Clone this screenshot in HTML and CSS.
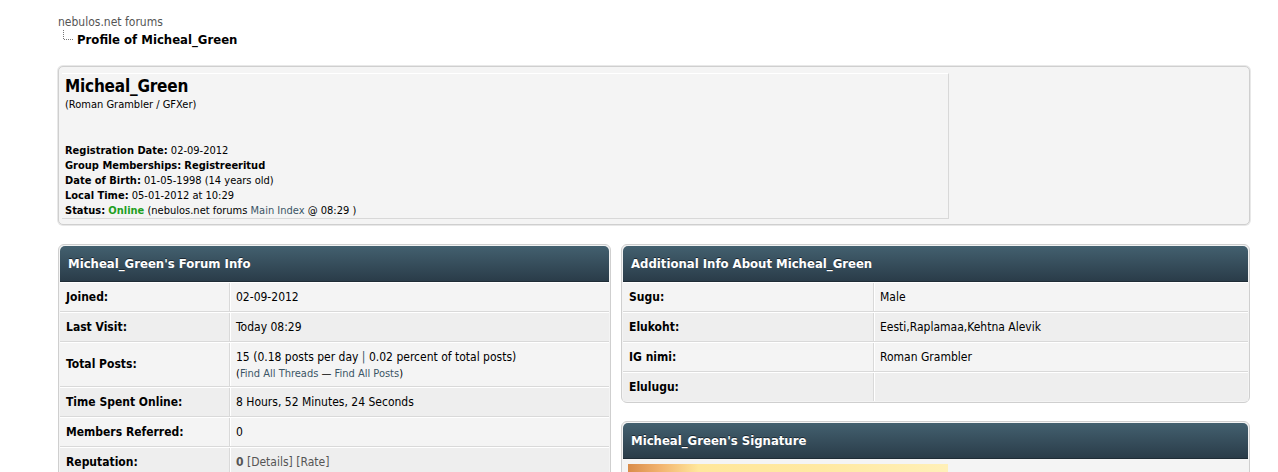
FILE: index.html
```html
<!DOCTYPE html>
<html>
<head>
<meta charset="utf-8">
<link rel="stylesheet" href="styles.css">
</head>
<body>
<div class="page">
  <div class="crumbs">
    <div class="crumb-root">nebulos.net forums</div>
    <div class="crumb-current">
      <svg class="tree" width="12" height="10" viewBox="0 0 12 10"><path d="M0.5 0v9.5H11" fill="none" stroke="#777" stroke-width="1" stroke-dasharray="1 1"/></svg>
      <span>Profile of Micheal_Green</span>
    </div>
  </div>

  <div class="profile">
    <div class="profile-main">
      <div class="pname">Micheal_Green</div>
      <div class="ptitle">(Roman Grambler / GFXer)</div>
      <div class="pdetails">
        <div><b>Registration Date:</b> 02-09-2012</div>
        <div><b>Group Memberships:</b> <b>Registreeritud</b></div>
        <div><b>Date of Birth:</b> 01-05-1998 (14 years old)</div>
        <div><b>Local Time:</b> 05-01-2012 at 10:29</div>
        <div><b>Status:</b> <b class="online">Online</b> (nebulos.net forums <a class="lnk">Main Index</a> @ 08:29 )</div>
      </div>
    </div>
    <div class="profile-side"></div>
  </div>

  <div class="columns">
    <div class="panel left">
      <div class="phead">Micheal_Green's Forum Info</div>
      <div class="row a"><div class="lbl">Joined:</div><div class="val">02-09-2012</div></div>
      <div class="row b"><div class="lbl">Last Visit:</div><div class="val">Today 08:29</div></div>
      <div class="row a tall"><div class="lbl">Total Posts:</div><div class="val">15 (0.18 posts per day <span class="pipe">|</span> 0.02 percent of total posts)<div class="small">(<a class="lnk">Find All Threads</a> — <a class="lnk">Find All Posts</a>)</div></div></div>
      <div class="row b"><div class="lbl">Time Spent Online:</div><div class="val">8 Hours, 52 Minutes, 24 Seconds</div></div>
      <div class="row a"><div class="lbl">Members Referred:</div><div class="val">0</div></div>
      <div class="row b"><div class="lbl">Reputation:</div><div class="val grey"><b>0</b> [Details] [Rate]</div></div>
    </div>
    <div class="rightcol">
      <div class="panel right">
        <div class="phead">Additional Info About Micheal_Green</div>
        <div class="row a"><div class="lbl">Sugu:</div><div class="val">Male</div></div>
        <div class="row b"><div class="lbl">Elukoht:</div><div class="val">Eesti,Raplamaa,Kehtna Alevik</div></div>
        <div class="row a"><div class="lbl">IG nimi:</div><div class="val">Roman Grambler</div></div>
        <div class="row b last"><div class="lbl">Elulugu:</div><div class="val"></div></div>
      </div>
      <div class="panel sig">
        <div class="phead">Micheal_Green's Signature</div>
        <div class="sigbody"><div class="sigimg"></div></div>
      </div>
    </div>
  </div>
</div>
</body>
</html>
```
FILE: styles.css
```css
html, body { margin: 0; padding: 0; background: #fff; }
body {
  font-family: "DejaVu Sans Condensed", "DejaVu Sans", sans-serif;
  font-size: 12px;
  color: #000;
  height: 472px;
  overflow: hidden;
}
.page { padding: 14px 28px 0 58px; }
.crumbs { height: 51px; }
.crumb-root { color: #555; font-size: 12px; line-height: 14px; margin-top: 1px; }
.crumb-current { display: flex; align-items: flex-start; font-weight: bold; font-size: 13px; line-height: 16px; margin-top: 1px; }
.tree { margin: 0 2px 0 5px; }
.crumb-current span { margin-top: 2px; }

.profile {
  display: flex;
  background: #f4f4f4;
  border: 1px solid #cfcfcf;
  border-radius: 5px;
  box-shadow: 0 0 0 1px #e8e8e8;
  padding: 6px 3px 6px 3px;
  height: 145px;
}
.profile-main {
  width: 887px;
  border-top: 1px solid #fff;
  border-right: 1px solid #d8d8d8;
  border-bottom: 1px solid #d8d8d8;
  padding: 2px 3px 0 3px;
  box-sizing: border-box;
  height: 146px;
}
.pname { font-weight: bold; font-size: 17px; line-height: 20px; letter-spacing: -0.2px; }
.ptitle { font-size: 11px; line-height: 16px; margin-top: 1px; }
.pdetails { margin-top: 30px; font-size: 11px; line-height: 15px; }
.online { color: #1f9f1f; }
.lnk { color: #3b5566; text-decoration: none; }
.profile-side { flex: 1; }

.columns { display: flex; gap: 10px; margin-top: 19px; align-items: flex-start; }
.left { width: 553px; }
.rightcol { width: 629px; display: flex; flex-direction: column; gap: 18px; }
.panel {
  border: 1px solid #cfcfcf;
  border-radius: 6px;
  padding: 1px;
  background: #f4f4f4;
  box-sizing: border-box;
}
.phead {
  height: 35px;
  line-height: 36px;
  border-radius: 5px 5px 0 0;
  background: linear-gradient(#43606f, #2a3c49);
  color: #fff;
  font-weight: bold;
  font-size: 13px;
  padding-left: 8px;
  text-shadow: 0 -1px 0 #1d2a33;
  border-bottom: 1px solid #1f2c36;
}
.row { display: grid; grid-template-columns: 170px 1fr; border-bottom: 1px solid #d9d9d9; border-top: 1px solid #fff; }
.right .row { grid-template-columns: 251px 1fr; }
.row.a { background: #f4f4f4; }
.row.b { background: #eeeeee; }
.row.last { border-bottom: none; }
.lbl { font-weight: bold; padding: 0 6px; height: 28px; line-height: 28px; border-right: 1px solid #d9d9d9; }
.val { padding: 0 5px; line-height: 28px; border-left: 1px solid #fff; }
.row.tall .lbl { height: 43px; line-height: 43px; }
.row.tall .val { line-height: 15px; padding-top: 7px; }
.small { font-size: 11px; line-height: 17px; }
.pipe { color: #3b5566; }
.grey { color: #555; }
.sigbody { padding: 5px 5px 0; height: 20px; }
.sigimg { width: 320px; height: 20px; background: linear-gradient(90deg, #d98c4a 0%, #f2b36e 10%, #ffe79b 22%, #ffe9a2 60%, #fff0b8 100%); }
```
